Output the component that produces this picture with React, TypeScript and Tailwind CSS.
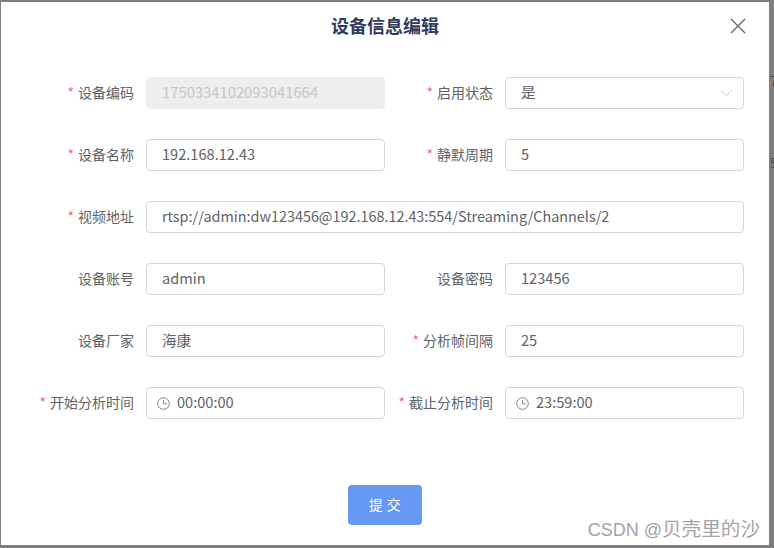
const font = "font-['Noto_Sans_CJK_SC','Liberation_Sans',sans-serif]";

function ClockIcon() {
  return (
    <svg width="13" height="13" viewBox="0 0 13 13" fill="none" stroke="#82858c" strokeWidth="1" className="mr-[7px] shrink-0">
      <circle cx="6.5" cy="6.5" r="5.8" />
      <path d="M6.5 3V6.8H9.8" />
    </svg>
  );
}

function Field({ label, value, required, wide, disabled, select, time, second }: {
  label: string;
  value: string;
  required?: boolean;
  wide?: boolean;
  disabled?: boolean;
  select?: boolean;
  time?: boolean;
  second?: boolean;
}) {
  return (
    <div className={wide ? "col-span-2 flex" : "flex"}>
      <div className={(second ? "w-[120px]" : "w-[145px]") + " shrink-0 pr-3 text-right text-sm leading-[30px] text-[#606266]"}>
        {required && <span className="mr-1 text-[#f56c6c]">*</span>}
        {label}
      </div>
      <div
        className={
          "flex h-8 flex-1 items-center rounded border " +
          (wide ? "text-[14.4px] " : disabled ? "text-[14.8px] " : "text-[14.6px] ") +
          (disabled
            ? "border-[#eeeeee] bg-[#eeeeee] text-[#c4c6ca] "
            : "border-[#d3d6dc] bg-white text-[#606266] ") +
          (time ? "pl-[10px]" : "pl-[15px]")
        }
      >
        {time && <ClockIcon />}
        <span className="flex-1 pb-[2px]">{value}</span>
        {select && (
          <svg width="11" height="6" viewBox="0 0 11 6" fill="none" stroke="#c8ccd2" className="mr-[11px]">
            <path d="M0.5 0.5L5.5 5.5L10.5 0.5" />
          </svg>
        )}
      </div>
    </div>
  );
}

export default function App() {
  return (
    <div className={"relative h-[548px] w-[774px] overflow-hidden bg-[#7f7f7f] pl-[1px] pt-[2px] " + font}>
      <div className="relative h-[543px] w-[768px] bg-white">
        <div className="relative flex h-[46px] items-center justify-center text-lg font-bold text-[#303a5c]">
          设备信息编辑
          <svg width="16" height="16" viewBox="0 0 16 16" fill="none" stroke="#5f6368" strokeWidth="1.3" className="absolute right-[23px] top-[16px]">
            <path d="M1 1L15 15M15 1L1 15" />
          </svg>
        </div>
        <div className="grid grid-cols-[384px_359px] gap-y-[30px] pt-[29px]">
          <Field label="设备编码" value="1750334102093041664" required disabled />
          <Field label="启用状态" value="是" required select second />
          <Field label="设备名称" value="192.168.12.43" required />
          <Field label="静默周期" value="5" required second />
          <Field label="视频地址" value="rtsp://admin:dw123456@192.168.12.43:554/Streaming/Channels/2" required wide />
          <Field label="设备账号" value="admin" />
          <Field label="设备密码" value="123456" second />
          <Field label="设备厂家" value="海康" />
          <Field label="分析帧间隔" value="25" required second />
          <Field label="开始分析时间" value="00:00:00" required time />
          <Field label="截止分析时间" value="23:59:00" required time second />
        </div>
        <div className="flex justify-center pt-[66px]">
          <button className="h-10 w-[74px] rounded bg-[#6698f5] pb-[2px] text-sm tracking-[0.5px] text-white">提 交</button>
        </div>
      </div>
      <div className="absolute right-0 top-[70px] w-[4px] overflow-hidden text-sm text-[#4a4a4a]">7</div>
      <div className="absolute right-0 top-[152px] w-[4px] overflow-hidden text-sm text-[#4a4a4a]">5</div>
      <div className="absolute bottom-[6px] right-[14px] whitespace-nowrap font-['Liberation_Sans','Noto_Sans_CJK_SC',sans-serif] text-lg leading-6 text-[#a3a3a3]">
        CSDN @<span className="text-[19.6px]">贝壳里的沙</span>
      </div>
    </div>
  );
}
